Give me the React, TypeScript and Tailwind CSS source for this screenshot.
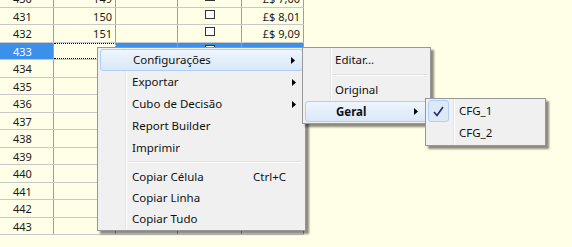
import React from 'react';

type Row = { n: number; q?: string; chk?: boolean; v?: string };

const rows: Row[] = [
    { n: 430, q: '149', chk: true, v: '£$ 7,00' },
    { n: 431, q: '150', chk: true, v: '£$ 8,01' },
    { n: 432, q: '151', chk: true, v: '£$ 9,09' },
    { n: 433, chk: true },
    { n: 434 },
    { n: 435 },
    { n: 436 },
    { n: 437 },
    { n: 438 },
    { n: 439 },
    { n: 440 },
    { n: 441 },
    { n: 442 },
    { n: 443 },
];

const Arrow = () => (
    <svg width="4" height="7" viewBox="0 0 4 7" className="shrink-0">
        <polygon points="0,0 4,3.5 0,7" fill="#000" />
    </svg>
);

const Sep = ({ indent }: { indent: string }) => (
    <div className={`h-[8px] flex flex-col justify-center ${indent} pr-[3px]`}>
        <div className="h-px bg-[#e0e0e0]" />
        <div className="h-px bg-white" />
    </div>
);

function GridRow({ r, i }: { r: Row; i: number }) {
    const h = i % 2 === 0 ? 'h-[18px]' : 'h-[17px]';
    const sel = r.n === 433;
    return (
        <div className={`flex ${h} border-b border-[#c8c8c8] text-[11px] leading-none`}>
            <div
                className={`w-[54px] border-r border-[#a0a0a0] flex items-center pl-[13px] ${
                    sel ? 'bg-[#3c90ea] text-white' : 'text-[#1a1a1a]'
                }`}
            >
                {r.n}
            </div>
            <div
                className={`w-[62px] border-r border-[#a0a0a0] flex items-center justify-end pr-[3px] text-[#1a1a1a] ${
                    sel ? 'border-y border-dotted border-y-black' : ''
                }`}
            >
                {r.q}
            </div>
            <div className={`w-[62px] border-r border-[#a0a0a0] ${sel ? 'bg-[#3c90ea]' : ''}`} />
            <div className={`w-[64px] border-r border-[#a0a0a0] flex justify-center pt-[2px] ${sel ? 'bg-[#3c90ea]' : ''}`}>
                {r.chk && <div className="w-[10px] h-[9px] border border-[#333] bg-white" />}
            </div>
            <div
                className={`w-[62px] border-r border-[#a0a0a0] flex items-center justify-end pr-[3px] text-[#1a1a1a] ${
                    sel ? 'bg-[#3c90ea]' : ''
                }`}
            >
                {r.v}
            </div>
        </div>
    );
}

const hi = 'mx-[2px] rounded-[3px] border border-[#aecff7] bg-gradient-to-b from-[#eef5fd] to-[#dae8f8]';

export default function App() {
    return (
        <div
            className="relative w-[572px] h-[247px] overflow-hidden bg-[#fffee6] text-[#111]"
            style={{ fontFamily: '"Noto Sans", "Open Sans", Arial, sans-serif' }}
        >
            {/* Grid */}
            <div className="-mt-[10px] w-[304px]">
                {rows.map((r, i) => (
                    <GridRow key={r.n} r={r} i={i} />
                ))}
            </div>

            {/* Context menu */}
            <div className="absolute left-[97px] top-[47px] w-[209px] border border-[#979797] bg-[#f0f0f0] py-px text-[11.5px] shadow-[3px_3px_2px_rgba(0,0,0,0.45)]">
                <div className="absolute left-[27px] top-0 bottom-0 w-[2px] flex">
                    <div className="w-px bg-[#e2e3e3]" />
                    <div className="w-px bg-white" />
                </div>
                <div className={`relative h-[22px] flex items-center pl-[32px] pr-[7px] ${hi}`}>
                    <span className="flex-1">Configurações</span>
                    <Arrow />
                </div>
                <div className="relative h-[22px] flex items-center pl-[34px] pr-[9px]">
                    <span className="flex-1">Exportar</span>
                    <Arrow />
                </div>
                <div className="relative h-[22px] flex items-center pl-[34px] pr-[9px]">
                    <span className="flex-1">Cubo de Decisão</span>
                    <Arrow />
                </div>
                <div className="relative h-[22px] flex items-center pl-[34px]">Report Builder</div>
                <div className="relative h-[21px] flex items-center pl-[34px]">Imprimir</div>
                <Sep indent="pl-[30px]" />
                <div className="relative h-[21px] flex items-center pl-[34px]">
                    <span className="w-[121px]">Copiar Célula</span>
                    <span>Ctrl+C</span>
                </div>
                <div className="relative h-[21px] flex items-center pl-[34px]">Copiar Linha</div>
                <div className="relative h-[21px] flex items-center pl-[34px]">Copiar Tudo</div>
            </div>

            {/* Submenu: Configurações */}
            <div className="absolute left-[302px] top-[47px] w-[129px] border border-[#979797] bg-[#f0f0f0] py-px text-[11.5px] shadow-[3px_3px_2px_rgba(0,0,0,0.45)]">
                <div className="absolute left-[27px] top-0 bottom-0 w-[2px] flex">
                    <div className="w-px bg-[#e2e3e3]" />
                    <div className="w-px bg-white" />
                </div>
                <div className="relative h-[22px] flex items-center pl-[32px]">Editar...</div>
                <Sep indent="pl-[30px]" />
                <div className="relative h-[22px] flex items-center pl-[32px]">Original</div>
                <div className={`relative h-[21px] flex items-center pl-[30px] pr-[9px] font-bold ${hi}`}>
                    <span className="flex-1">Geral</span>
                    <Arrow />
                </div>
            </div>

            {/* Submenu: Geral */}
            <div className="absolute left-[425px] top-[98px] w-[121px] border border-[#979797] bg-[#f0f0f0] py-px text-[11.5px] shadow-[3px_3px_2px_rgba(0,0,0,0.45)]">
                <div className="absolute left-[27px] top-0 bottom-0 w-[2px] flex">
                    <div className="w-px bg-[#e2e3e3]" />
                    <div className="w-px bg-white" />
                </div>
                <div className="relative h-[22px] flex items-center">
                    <div className="ml-[2px] w-[21px] h-[22px] rounded-[3px] border border-[#aecff7] bg-[#dde9f7] flex items-center justify-center">
                        <svg width="11" height="11" viewBox="0 0 11 11">
                            <path d="M1 6 L4 9.5 L10 1" fill="none" stroke="#1c2a7c" strokeWidth="1.6" />
                        </svg>
                    </div>
                    <span className="ml-[10px]">CFG_1</span>
                </div>
                <div className="relative h-[22px] flex items-center pl-[33px]">CFG_2</div>
            </div>
        </div>
    );
}
